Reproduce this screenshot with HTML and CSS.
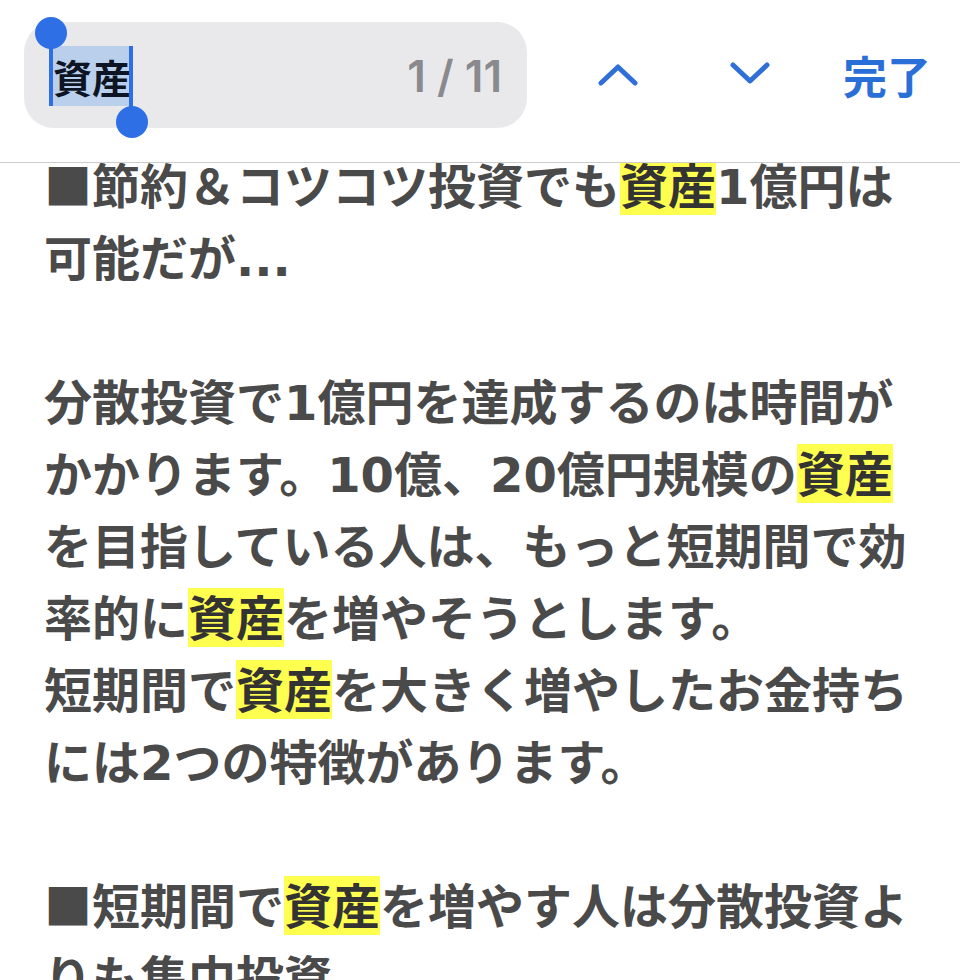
FILE: index.html
```html
<!DOCTYPE html>
<html lang="ja">
<head>
  <meta charset="UTF-8" />
  <meta name="viewport" content="width=device-width, initial-scale=1.0"/>
  <title>ページ内を検索</title>
  <link rel="stylesheet" href="styles.css">
</head>
<body>

  <div class="barra-busca">
    <div class="campo">
      <span class="consulta">資産<span class="alca inicio"></span><span class="alca fim"></span></span>
      <span class="contador">1 / 11</span>
    </div>
    <button class="seta cima" aria-label="前へ">
      <svg width="40" height="22" viewBox="0 0 40 22"><polyline points="3,19 20,3 37,19" /></svg>
    </button>
    <button class="seta baixo" aria-label="次へ">
      <svg width="40" height="22" viewBox="0 0 40 22"><polyline points="3,3 20,19 37,3" /></svg>
    </button>
    <button class="concluir">完了</button>
  </div>

  <div class="artigo">
    <p>■節約＆コツコツ投資でも<mark>資産</mark><span class="num">1</span>億円は可能だが<span class="num">...</span></p>
    <p>分散投資で<span class="num">1</span>億円を達成するのは時間がかかります。<span class="num">10</span>億、<span class="num">20</span>億円規模の<mark>資産</mark>を目指している人は、もっと短期間で効率的に<mark>資産</mark>を増やそうとします。<br>短期間で<mark>資産</mark>を大きく増やしたお金持ちには<span class="num">2</span>つの特徴があります。</p>
    <p>■短期間で<mark>資産</mark>を増やす人は分散投資よりも集中投資</p>
  </div>

</body>
</html>
```

FILE: styles.css
```css
body {
  margin: 0;
  background: #fff;
  font-family: "Noto Sans CJK JP", sans-serif;
  overflow: hidden;
}

.barra-busca {
  position: relative;
  z-index: 1;
  height: 140px;
  padding: 22px 0 0 24px;
  border-bottom: 1px solid #cdcdcd;
  background: #fff;
  display: flex;
  align-items: flex-start;
}

.campo {
  width: 503px;
  height: 106px;
  box-sizing: border-box;
  padding: 0 25px 0 29px;
  border-radius: 30px;
  background: #e9e9eb;
  display: flex;
  align-items: center;
  justify-content: space-between;
}

.consulta {
  position: relative;
  display: inline-block;
  height: 60px;
  line-height: 60px;
  font-size: 39px;
  font-weight: bold;
  color: #0d1424;
  background: #b9cfec;
  margin-top: 2px;
}

.alca {
  position: absolute;
  width: 4px;
  background: #2f6fe6;
}

.alca::before {
  content: "";
  position: absolute;
  width: 32px;
  height: 32px;
  border-radius: 50%;
  background: #2f6fe6;
  left: -14px;
}

.alca.inicio {
  left: -4px;
  top: 0;
  height: 60px;
}

.alca.inicio::before {
  top: -29px;
}

.alca.fim {
  right: -2px;
  top: 0;
  height: 76px;
}

.alca.fim::before {
  bottom: -16px;
  left: -13px;
}

.contador {
  font-family: "Inter", sans-serif;
  font-weight: 600;
  font-size: 44px;
  color: #8a8a8e;
  margin-top: 2px;
}

button {
  background: none;
  border: none;
  padding: 0;
  cursor: pointer;
}

.seta {
  height: 106px;
  display: flex;
  align-items: center;
}

.seta svg polyline {
  fill: none;
  stroke: #2f6fd8;
  stroke-width: 5;
  stroke-linecap: round;
  stroke-linejoin: round;
}

.seta.cima {
  margin-left: 71px;
}

.seta.baixo {
  margin-left: 92px;
  margin-top: -2px;
}

.concluir {
  margin-left: 73px;
  height: 106px;
  font-family: "Noto Sans CJK JP", sans-serif;
  font-size: 44px;
  font-weight: bold;
  color: #2a6fd8;
  line-height: 106px;
}

.artigo {
  margin-top: -16px;
  padding: 0 44px;
  font-size: 48px;
  line-height: 72px;
  font-weight: bold;
  color: #4a4a4a;
}

.artigo p {
  margin: 0 0 72px;
}

.num {
  font-family: "DejaVu Sans", sans-serif;
  line-height: 1;
}

mark {
  color: #333;
  background: linear-gradient(#ffff50, #ffff50) 0 8px / 100% 59px no-repeat;
}
```
